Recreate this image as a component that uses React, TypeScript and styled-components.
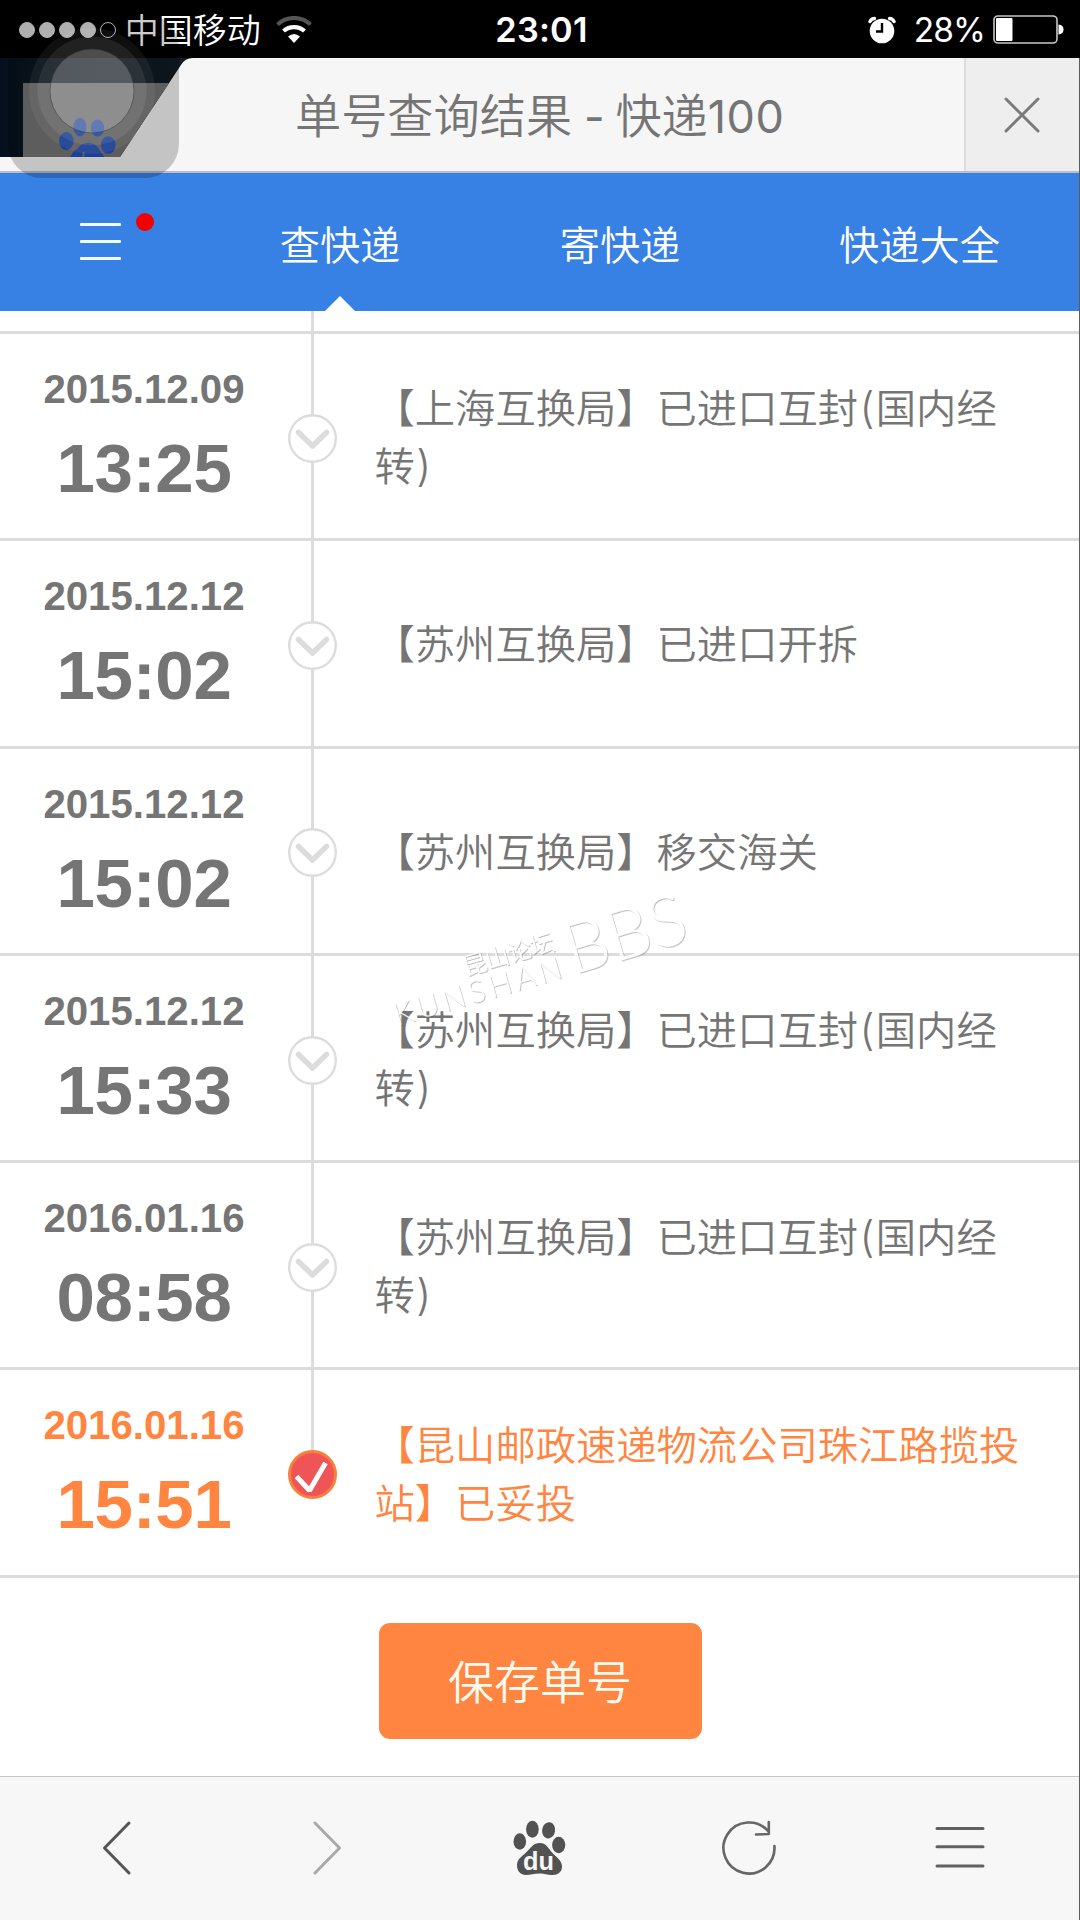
import React from "react";
import styled, { createGlobalStyle } from "styled-components";

const cjk = `"Noto Sans CJK SC", "Noto Sans", sans-serif`;

const GlobalStyle = createGlobalStyle`
  * { box-sizing: border-box; }
  body { margin: 0; background: #fff; font-family: ${cjk}; font-weight: 350; }
  svg { display: block; }
`;

const Screen = styled.div`
  position: relative;
  width: 1080px;
  height: 1920px;
  overflow: hidden;
  display: flex;
  flex-direction: column;
`;

const StatusBar = styled.header`
  height: 58px;
  flex: none;
  background: #000;
  color: #fff;
  display: grid;
  grid-template-columns: 1fr auto 1fr;
  align-items: center;
  padding: 0 16px 0 19px;
`;

const StatusGroup = styled.div<{ $end?: boolean }>`
  display: flex;
  align-items: center;
  justify-content: ${(p) => (p.$end ? "flex-end" : "flex-start")};
`;

const Signal = styled.div`
  display: flex;
  gap: 4.2px;
  margin-right: 9px;
`;

const SignalDot = styled.i<{ $on: boolean }>`
  width: 16px;
  height: 16px;
  border-radius: 50%;
  border: 1px solid #ddd;
  background: ${(p) => (p.$on ? "#ddd" : "transparent")};
`;

const Carrier = styled.span`
  font-size: 34px;
  line-height: 54px;
  padding-bottom: 2px;
  margin-right: 15px;
`;

const Clock = styled.span`
  font: 600 34.3px/58px Inter, sans-serif;
  padding-top: 1px;
  letter-spacing: 0.2px;
`;

const Percent = styled.span`
  font: 400 33.5px/58px Inter, sans-serif;
  letter-spacing: -0.9px;
  padding-top: 1px;
  margin: 0 8px 0 18px;
`;

const Page = styled.div`
  flex: 1;
  display: flex;
  flex-direction: column;
  border-right: 1px solid #5c5c5c;
`;

const TitleBar = styled.div`
  height: 115px;
  flex: none;
  display: grid;
  grid-template-columns: 964px 1fr;
  background: #f6f6f6;
  border-bottom: 2px solid #b9bfca;
`;

const Title = styled.h1`
  margin: 0;
  padding: 0 0 0 295px;
  font-size: 46.2px;
  font-weight: 350;
  line-height: 109px;
  color: #757575;
  white-space: pre;
`;

const Latin = styled.span<{ $tight?: boolean }>`
  font-family: Inter, sans-serif;
  font-weight: 400;
  font-size: 45px;
  letter-spacing: ${(p) => (p.$tight ? "-0.9px" : "0.5px")};
`;

const CloseButton = styled.button`
  border: 0;
  border-left: 2px solid #dcdcdc;
  background: #eee;
  padding: 1px 2px 0 0;
  display: flex;
  align-items: center;
  justify-content: center;
`;

const Nav = styled.nav`
  height: 138px;
  flex: none;
  display: grid;
  grid-template-columns: 200px 280px 280px 1fr;
  background: #3780e4;
  color: #fff;
`;

const MenuCell = styled.div`
  display: flex;
  align-items: center;
  justify-content: center;
  padding: 0 0 1px 1px;
`;

const Burger = styled.div`
  position: relative;
  width: 41px;
  display: flex;
  flex-direction: column;
  gap: 14px;
`;

const BurgerLine = styled.i`
  height: 3px;
  border-radius: 1px;
  background: #f4fbff;
`;

const Unread = styled.i`
  position: absolute;
  left: 56px;
  top: -10px;
  width: 18px;
  height: 18px;
  border-radius: 50%;
  background: #f50000;
`;

const Tab = styled.a<{ $active?: boolean }>`
  position: relative;
  display: flex;
  align-items: center;
  justify-content: center;
  font-size: 40.2px;
  line-height: 58px;
  padding-top: 1px;
  ${(p) =>
    p.$active &&
    `&::after {
      content: "";
      position: absolute;
      bottom: 0;
      left: 125px;
      border: 15px solid transparent;
      border-top: 0;
      border-bottom-color: #fff;
    }`}
`;

const Timeline = styled.ol`
  list-style: none;
  margin: 0;
  padding: 0;
`;

const Row = styled.li<{ $tone: string; $h: number }>`
  height: ${(p) => p.$h}px;
  border-bottom: 3px solid #dcdcdc;
  display: grid;
  grid-template-columns: 288px 49px 700px;
  color: ${(p) => p.$tone};
`;

const When = styled.div`
  display: flex;
  flex-direction: column;
  align-items: center;
  gap: 17px;
  padding-top: 32px;
  font-family: "Liberation Sans", Arial, sans-serif;
  font-weight: 700;
`;

const DateText = styled.time`
  font-size: 40.2px;
  line-height: 48px;
`;

const TimeText = styled.time`
  font-size: 69px;
  line-height: 76px;
  letter-spacing: -0.3px;
`;

const Rail = styled.div<{ $last?: boolean }>`
  display: flex;
  align-items: center;
  justify-content: center;
  padding-top: 1px;
  margin-bottom: -3px;
  background: linear-gradient(#dcdcdc, #dcdcdc) 23px 0 / 3px ${(p) => (p.$last ? "50%" : "100%")} no-repeat;
`;

const Detail = styled.p`
  margin: -2px 0 0 37.5px;
  align-self: center;
  font-size: 40.3px;
  line-height: 58px;
  white-space: nowrap;
`;

const DetailLine = styled.span`
  display: block;
  height: 58px;
`;

const Paren = styled.span`
  font-family: Inter, sans-serif;
  font-weight: 300;
  font-size: 43px;
  line-height: 1;
  padding: 0 1.4px;
`;

const Actions = styled.div`
  flex: 1;
  display: flex;
  align-items: flex-start;
  justify-content: center;
  padding: 45px 0 0 1px;
`;

const SaveButton = styled.button`
  width: 323px;
  height: 116px;
  border: 0;
  border-radius: 11px;
  background: #ff8540;
  color: #fffaf0;
  font: 350 46px/60px ${cjk};
  padding: 0 0 3px;
`;

const ToolBar = styled.footer`
  height: 144px;
  flex: none;
  border-top: 1px solid #c6c6c6;
  background: #f7f7f7;
  padding: 0 14px 2px 12px;
  display: grid;
  grid-template-columns: repeat(5, 1fr);
  align-items: center;
  justify-items: center;
`;

const Floating = styled.svg`
  position: absolute;
  left: 0;
  top: 0;
`;

const Watermark = styled.svg`
  position: absolute;
  left: 380px;
  top: 870px;
  filter: drop-shadow(1px 1px 0.3px rgba(90, 90, 90, 0.42));
  opacity: 0.85;
`;

const GREY = "#757575";
const ORANGE = "#ff8540";

const entries = [
  { date: "2015.12.09", time: "13:25", lines: ["【上海互换局】已进口互封(国内经", "转)"] },
  { date: "2015.12.12", time: "15:02", lines: ["【苏州互换局】已进口开拆"] },
  { date: "2015.12.12", time: "15:02", lines: ["【苏州互换局】移交海关"] },
  { date: "2015.12.12", time: "15:33", lines: ["【苏州互换局】已进口互封(国内经", "转)"] },
  { date: "2016.01.16", time: "08:58", lines: ["【苏州互换局】已进口互封(国内经", "转)"] },
  { date: "2016.01.16", time: "15:51", lines: ["【昆山邮政速递物流公司珠江路揽投", "站】已妥投"], done: true },
];

const withParens = (text: string) =>
  text
    .split(/([()])/)
    .filter(Boolean)
    .map((part, i) => (part === "(" || part === ")" ? <Paren key={i}>{part}</Paren> : part));

const StepIcon = ({ done }: { done?: boolean }) =>
  done ? (
    <svg width="49" height="49" viewBox="0 0 49 49">
      <circle cx="24.5" cy="24.5" r="23" fill="#ef5456" stroke="#f97f3c" strokeWidth="3" />
      <path d="M8.5 26.5L21.5 40.5L37.5 13" fill="none" stroke="#fff" strokeWidth="5" strokeLinejoin="bevel" />
    </svg>
  ) : (
    <svg width="49" height="49" viewBox="0 0 49 49">
      <circle cx="24.5" cy="24.5" r="23.3" fill="#fff" stroke="#dcdcdc" strokeWidth="2.4" />
      <path d="M10.5 18.5L24.5 32L38.5 18.5" fill="none" stroke="#dcdcdc" strokeWidth="5.5" strokeLinecap="round" strokeLinejoin="round" />
    </svg>
  );

const WifiIcon = () => (
  <svg width="36" height="28" viewBox="0 0 36 28">
    <path d="M1.5 8.5A24 24 0 0 1 34.5 8.5" fill="none" stroke="#555" strokeWidth="4" />
    <path d="M7.5 15A16 16 0 0 1 28.5 15" fill="none" stroke="#fff" strokeWidth="4.2" />
    <path d="M12 20.5Q18 15.5 24 20.5L18 27Z" fill="#fff" />
  </svg>
);

const AlarmIcon = () => (
  <svg width="28" height="28" viewBox="0 0 28 28">
    <circle cx="14" cy="15" r="12.3" fill="#fff" />
    <path d="M14 7V15.5H8" fill="none" stroke="#000" strokeWidth="2.4" />
    <path d="M2 5.5Q3.5 2.5 6.5 2.5M21.5 2.5Q24.5 2.5 26 5.5" fill="none" stroke="#fff" strokeWidth="3.4" strokeLinecap="round" />
  </svg>
);

const BatteryIcon = () => (
  <svg width="71" height="29" viewBox="0 0 71 29">
    <rect x="1" y="1" width="63" height="27" rx="4" fill="none" stroke="#c8c8c8" strokeWidth="1.6" />
    <rect x="3" y="3" width="16.5" height="23" rx="1" fill="#fff" />
    <path d="M65.5 9.5Q70.5 10 70.5 14.5T65.5 19.5Z" fill="#fff" />
  </svg>
);

const PawSvg = styled.svg`
  margin-left: 4px;
`;

const PawIcon = () => (
  <PawSvg width="54" height="56" viewBox="0 0 54 56">
    <g fill="#525252">
      <ellipse cx="19.4" cy="9.3" rx="6.3" ry="8.5" />
      <ellipse cx="6.8" cy="21.5" rx="6.3" ry="8.3" />
      <ellipse cx="35.6" cy="10.3" rx="6.5" ry="8.2" transform="rotate(10 35.6 10.3)" />
      <ellipse cx="45.7" cy="25" rx="6.6" ry="8.3" />
      <path d="M27 23C33 23 35 28 39 32.5C43 37 49 40.5 49 46.5C49 52 45 55 39.5 55C34 55 32 53.5 26.5 53.5C21 53.5 18 55 13 55C7.5 55 4 51 4 45.5C4 39 9 36.5 13 32.5C18 28 20 23 27 23Z" />
    </g>
    <text x="10" y="50" textLength="31" lengthAdjust="spacingAndGlyphs" fontFamily="Liberation Sans, Arial, sans-serif" fontWeight="700" fontSize="25" fill="#f7f7f7">du</text>
  </PawSvg>
);

const line = { fill: "none", strokeWidth: 3, strokeLinecap: "round", strokeLinejoin: "round" } as const;

export default function App() {
  return (
    <Screen>
      <GlobalStyle />
      <StatusBar>
        <StatusGroup>
          <Signal>
            {[true, true, true, true, false].map((on, i) => (
              <SignalDot key={i} $on={on} />
            ))}
          </Signal>
          <Carrier>中国移动</Carrier>
          <WifiIcon />
        </StatusGroup>
        <Clock>23:01</Clock>
        <StatusGroup $end>
          <AlarmIcon />
          <Percent>28%</Percent>
          <BatteryIcon />
        </StatusGroup>
      </StatusBar>
      <Page>
        <TitleBar>
          <Title>
            单号查询结果<Latin $tight> - </Latin>快递<Latin>100</Latin>
          </Title>
          <CloseButton aria-label="关闭">
            <svg width="36" height="36" viewBox="0 0 36 36">
              <path d="M2 2L34 34M34 2L2 34" stroke="#7a7a7a" {...line} />
            </svg>
          </CloseButton>
        </TitleBar>
        <Nav>
          <MenuCell>
            <Burger>
              <BurgerLine />
              <BurgerLine />
              <BurgerLine />
              <Unread />
            </Burger>
          </MenuCell>
          <Tab $active>查快递</Tab>
          <Tab>寄快递</Tab>
          <Tab>快递大全</Tab>
        </Nav>
        <Timeline>
          <Row $tone={GREY} $h={23}>
            <span />
            <Rail />
          </Row>
          {entries.map((e, i) => (
            <Row key={i} $tone={e.done ? ORANGE : GREY} $h={207.3}>
              <When>
                <DateText>{e.date}</DateText>
                <TimeText>{e.time}</TimeText>
              </When>
              <Rail $last={e.done}>
                <StepIcon done={e.done} />
              </Rail>
              <Detail>
                {e.lines.map((l) => (
                  <DetailLine key={l}>{withParens(l)}</DetailLine>
                ))}
              </Detail>
            </Row>
          ))}
        </Timeline>
        <Actions>
          <SaveButton>保存单号</SaveButton>
        </Actions>
        <ToolBar>
          <svg width="30" height="56" viewBox="0 0 30 56">
            <path d="M27 3L2.5 28L27 53" stroke="#555" {...line} />
          </svg>
          <svg width="30" height="56" viewBox="0 0 30 56">
            <path d="M2 3L26.5 28L2 53" stroke="#a9a9a9" {...line} />
          </svg>
          <PawIcon />
          <svg width="56" height="56" viewBox="0 0 56 56">
            <path d="M53.4 26A25.5 25.5 0 1 1 47.6 11.7M47.8 2V14L35 14.5" stroke="#666" {...line} strokeWidth={2.6} />
          </svg>
          <svg width="50" height="44" viewBox="0 0 50 44">
            <path d="M2 2.5H48M2 20.7H48M2 40H48" stroke="#606060" {...line} />
          </svg>
        </ToolBar>
      </Page>
      <Watermark width="330" height="190" viewBox="380 870 330 190">
        <g transform="translate(397 1026) rotate(-16.3)" fill="#fff">
          <text x="80" y="-29" fontSize="24" fontWeight="350" textLength="94">昆山论坛</text>
          <text x="0" y="0" fontSize="31" fontFamily="Lato" fontWeight="300" textLength="174">KUNSHAN</text>
          <text x="183" y="0" fontSize="71" fontFamily="Lato" fontWeight="300" textLength="124" lengthAdjust="spacingAndGlyphs">BBS</text>
        </g>
      </Watermark>
      <Floating width="200" height="190" viewBox="0 0 200 190">
        <defs>
          <linearGradient id="night" x1="0" x2="1" y1="0" y2="0">
            <stop offset="0" stopColor="#050f20" />
            <stop offset="0.15" stopColor="#0a161e" />
            <stop offset="1" stopColor="#131d24" />
          </linearGradient>
          <clipPath id="corner">
            <path d="M0 58H193Q185 58 181 65L120 157H0Z" />
          </clipPath>
        </defs>
        <g clipPath="url(#corner)">
          <rect y="58" width="200" height="100" fill="url(#night)" />
          <rect x="23" y="83" width="170" height="80" fill="#757575" />
          <g fill="#2450b8">
            <ellipse cx="80" cy="127" rx="6.5" ry="9.3" />
            <ellipse cx="97.5" cy="128" rx="6.7" ry="8.6" />
            <ellipse cx="66.3" cy="141" rx="7.3" ry="9" />
            <ellipse cx="108.3" cy="145" rx="7.3" ry="8.8" />
            <path d="M70 158Q72 152 77 149Q81 143 88 143Q96 143 99 149L105 158Z" />
          </g>
          <path d="M83.5 152V158" stroke="#777" strokeWidth="2" />
        </g>
        <rect x="8" y="14" width="171" height="164" rx="34" fill="#000" fillOpacity="0.2" />
        <circle cx="92" cy="91" r="63" fill="#fff" fillOpacity="0.06" />
        <circle cx="92" cy="91" r="54.5" fill="#fff" fillOpacity="0.08" />
        <circle cx="92" cy="91" r="42" fill="#fff" fillOpacity="0.2" stroke="#333" strokeOpacity="0.45" />
      </Floating>
    </Screen>
  );
}
